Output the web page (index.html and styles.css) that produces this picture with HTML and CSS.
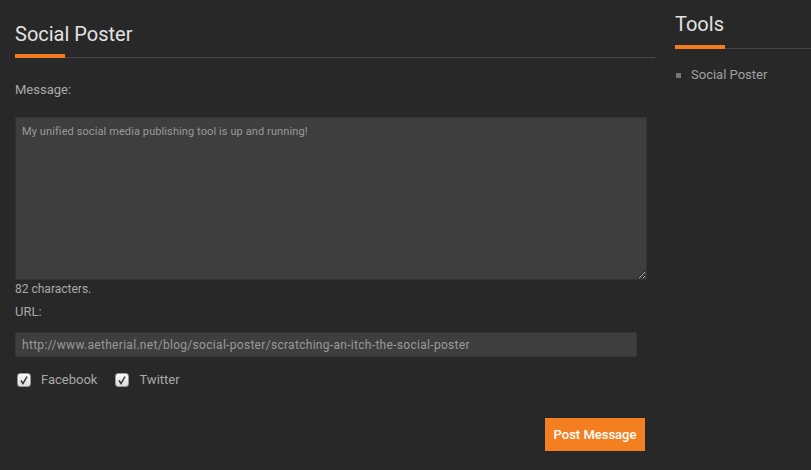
FILE: index.html
```html
<!DOCTYPE html>
<html>
<head>
<meta charset="utf-8">
<link rel="stylesheet" href="styles.css">
</head>
<body>
<div class="page">
  <div class="main">
    <h1 class="heading"><span class="heading-text">Social Poster</span></h1>
    <div class="label label-message">Message:</div>
    <textarea class="message">My unified social media publishing tool is up and running!</textarea>
    <div class="count">82 characters.</div>
    <div class="label label-url">URL:</div>
    <input class="url" type="text" value="http://www.aetherial.net/blog/social-poster/scratching-an-itch-the-social-poster">
    <div class="checks">
      <label class="check"><span class="box"><svg width="10" height="10" viewBox="0 0 10 10"><path d="M2 5.5 L4 8.5 L8 1.5" fill="none" stroke="#333" stroke-width="1.5"/></svg></span>Facebook</label>
      <label class="check"><span class="box"><svg width="10" height="10" viewBox="0 0 10 10"><path d="M2 5.5 L4 8.5 L8 1.5" fill="none" stroke="#333" stroke-width="1.5"/></svg></span>Twitter</label>
    </div>
    <div class="actions">
      <button class="post">Post Message</button>
    </div>
  </div>
  <div class="sidebar">
    <h2 class="heading heading-side"><span class="heading-text">Tools</span></h2>
    <ul class="tools">
      <li>Social Poster</li>
    </ul>
  </div>
</div>
</body>
</html>
```
FILE: styles.css
```css
html, body {
  margin: 0;
  padding: 0;
  background: #282828;
  font-family: Roboto, "Open Sans", sans-serif;
  color: #aaaaaa;
}
.page {
  display: flex;
  gap: 20px;
  padding-left: 15px;
  height: 470px;
  overflow: hidden;
}
.main {
  width: 640px;
  flex: none;
}
.sidebar {
  flex: 1;
  min-width: 0;
}
.heading {
  margin: 20px 0 0 0;
  font-size: 20px;
  font-weight: 400;
  line-height: 28px;
  color: #e2e2e2;
  border-bottom: 1px solid #464646;
  padding-bottom: 9px;
  position: relative;
}
.heading-text {
  display: inline-block;
}
.heading::after {
  content: "";
  position: absolute;
  left: 0;
  bottom: -1px;
  width: 50px;
  height: 4px;
  background: #f47c20;
}
.heading-side {
  margin-top: 10px;
  padding-bottom: 10px;
}
.label {
  font-size: 13px;
  line-height: 16px;
  color: #a8a8a8;
}
.label-message {
  margin-top: 24px;
}
.message {
  display: block;
  box-sizing: border-box;
  width: 632px;
  height: 163px;
  margin-top: 19px;
  background: #3e3e3e;
  border: 1px solid #333;
  border-radius: 0;
  padding: 6px 6px;
  font-family: Roboto, "Open Sans", sans-serif;
  font-size: 11px;
  line-height: 15px;
  letter-spacing: 0.1px;
  color: #9a9a9a;
  outline: none;
}
.count {
  font-size: 12px;
  line-height: 16px;
  margin-top: 1px;
  color: #a8a8a8;
}
.label-url {
  margin-top: 7px;
}
.url {
  display: block;
  box-sizing: border-box;
  width: 622px;
  height: 25px;
  margin-top: 12px;
  background: #3e3e3e;
  border: 1px solid #353535;
  border-radius: 2px;
  padding: 0 6px;
  font-family: Roboto, "Open Sans", sans-serif;
  font-size: 12px;
  letter-spacing: 0.3px;
  color: #9a9a9a;
  outline: none;
}
.checks {
  display: flex;
  gap: 18px;
  margin-top: 15px;
  padding-left: 2px;
}
.check {
  display: flex;
  align-items: center;
  gap: 10px;
  font-size: 13px;
  line-height: 16px;
  color: #a8a8a8;
}
.box {
  width: 14px;
  height: 14px;
  box-sizing: border-box;
  border-radius: 3px;
  background: linear-gradient(#fafafa, #dcdcdc);
  border: 1px solid #999;
  display: flex;
  align-items: center;
  justify-content: center;
}
.actions {
  display: flex;
  justify-content: flex-end;
  padding-right: 10px;
  margin-top: 30px;
}
.post {
  width: 100px;
  height: 33px;
  border: none;
  background: #f47f20;
  color: #fff;
  font-family: Roboto, "Open Sans", sans-serif;
  font-size: 13px;
  font-weight: 500;
  padding: 0;
  cursor: pointer;
}
.tools {
  list-style: none;
  margin: 18px 0 0 0;
  padding: 0;
}
.tools li {
  font-size: 13px;
  line-height: 16px;
  color: #a0a0a0;
  display: flex;
  align-items: center;
  gap: 10px;
}
.tools li::before {
  content: "";
  width: 5px;
  height: 5px;
  background: #777;
  margin-left: 1px;
}
```
